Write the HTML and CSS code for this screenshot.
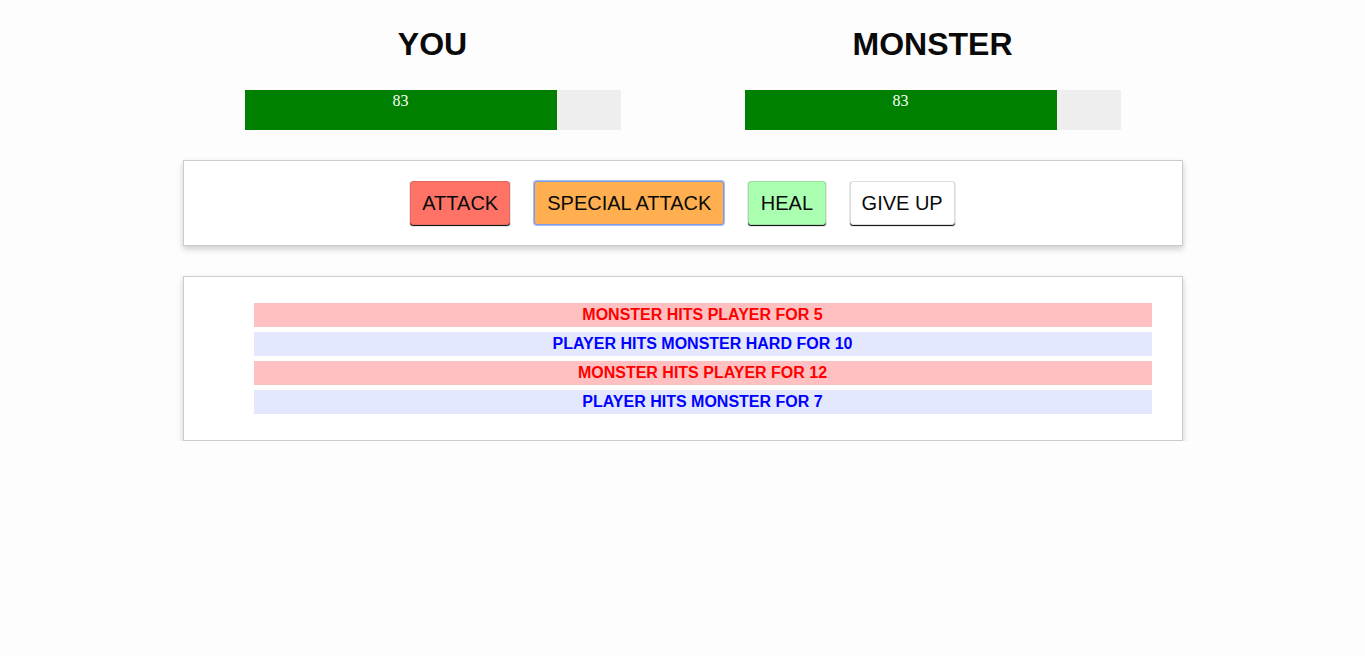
FILE: index.html
```html
<!DOCTYPE html>
<html>
<head>
<meta charset="utf-8">
<link rel="stylesheet" href="styles.css">
</head>
<body>
<div class="container">
  <section class="players">
    <div class="player">
      <h1 class="name">YOU</h1>
      <div class="healthbar">
        <div class="fill" style="width: 83%">83</div>
      </div>
    </div>
    <div class="player">
      <h1 class="name">MONSTER</h1>
      <div class="healthbar">
        <div class="fill" style="width: 83%">83</div>
      </div>
    </div>
  </section>
  <section class="controls">
    <button class="btn attack">ATTACK</button>
    <button class="btn special focused">SPECIAL ATTACK</button>
    <button class="btn heal">HEAL</button>
    <button class="btn giveup">GIVE UP</button>
  </section>
  <section class="log">
    <ul class="log-list">
      <li class="monster-turn">Monster hits Player for 5</li>
      <li class="player-turn">Player hits Monster hard for 10</li>
      <li class="monster-turn">Monster hits Player for 12</li>
      <li class="player-turn">Player hits Monster for 7</li>
    </ul>
  </section>
</div>
</body>
</html>
```

FILE: styles.css
```css
html, body {
  margin: 0;
  padding: 0;
  background: #fdfdfd;
  font-family: "Liberation Sans", Arial, sans-serif;
  color: #0a0a0a;
}

.container {
  width: 1000px;
  margin: 0 auto;
}

.players {
  display: flex;
  padding-top: 24px;
}

.player {
  flex: 1;
  padding: 0 15px;
  display: flex;
  flex-direction: column;
  align-items: center;
}

.name {
  margin: 0;
  font-size: 32px;
  line-height: 40px;
  font-weight: bold;
  text-align: center;
}

.healthbar {
  margin-top: 26px;
  width: 80%;
  height: 40px;
  background: #eeeeee;
}

.fill {
  height: 40px;
  background: #008000;
  color: #fff;
  text-align: center;
  font-family: "Liberation Serif", "Times New Roman", serif;
  font-size: 16px;
  line-height: 22px;
}

.controls, .log {
  border: 1px solid #ccc;
  box-shadow: 0 3px 6px #ccc;
  background: #fff;
}

.controls {
  margin-top: 30px;
  display: flex;
  justify-content: center;
  align-items: flex-start;
  gap: 24px;
  padding: 20px 10px;
}

.log {
  margin-top: 30px;
  padding: 10px;
}

.btn {
  font-family: "Liberation Sans", Arial, sans-serif;
  font-size: 20px;
  line-height: 20px;
  padding: 0 11px;
  height: 44px;
  border: 1px solid #bbb;
  border-radius: 3px;
  box-shadow: 0 1px 1px #000;
  color: #0a0a0a;
  background: #fff;
}

.attack { background: #ff7367; border-color: #e06a60; }
.special { background: #ffaf4f; padding: 0 12px; }
.heal { background: #aaffb0; border-color: #9ae0a0; padding: 0 11.5px; }
.giveup { background: #fff; border-color: #ddd; }
.focused { border-color: #7b9be6; box-shadow: 0 0 0 1px #a8bdf0; }

.log-list {
  list-style: none;
  margin: 16px 0 16px 60px;
  padding: 0 20px 0 0;
  font-weight: bold;
  text-transform: uppercase;
  font-size: 16px;
}

.log-list li {
  height: 24px;
  line-height: 24px;
  text-align: center;
  margin-bottom: 5px;
}

.log-list li:last-child { margin-bottom: 0; }

.player-turn { color: #0000ff; background: #e4e8ff; }
.monster-turn { color: #ff0000; background: #ffc0c1; }
```
